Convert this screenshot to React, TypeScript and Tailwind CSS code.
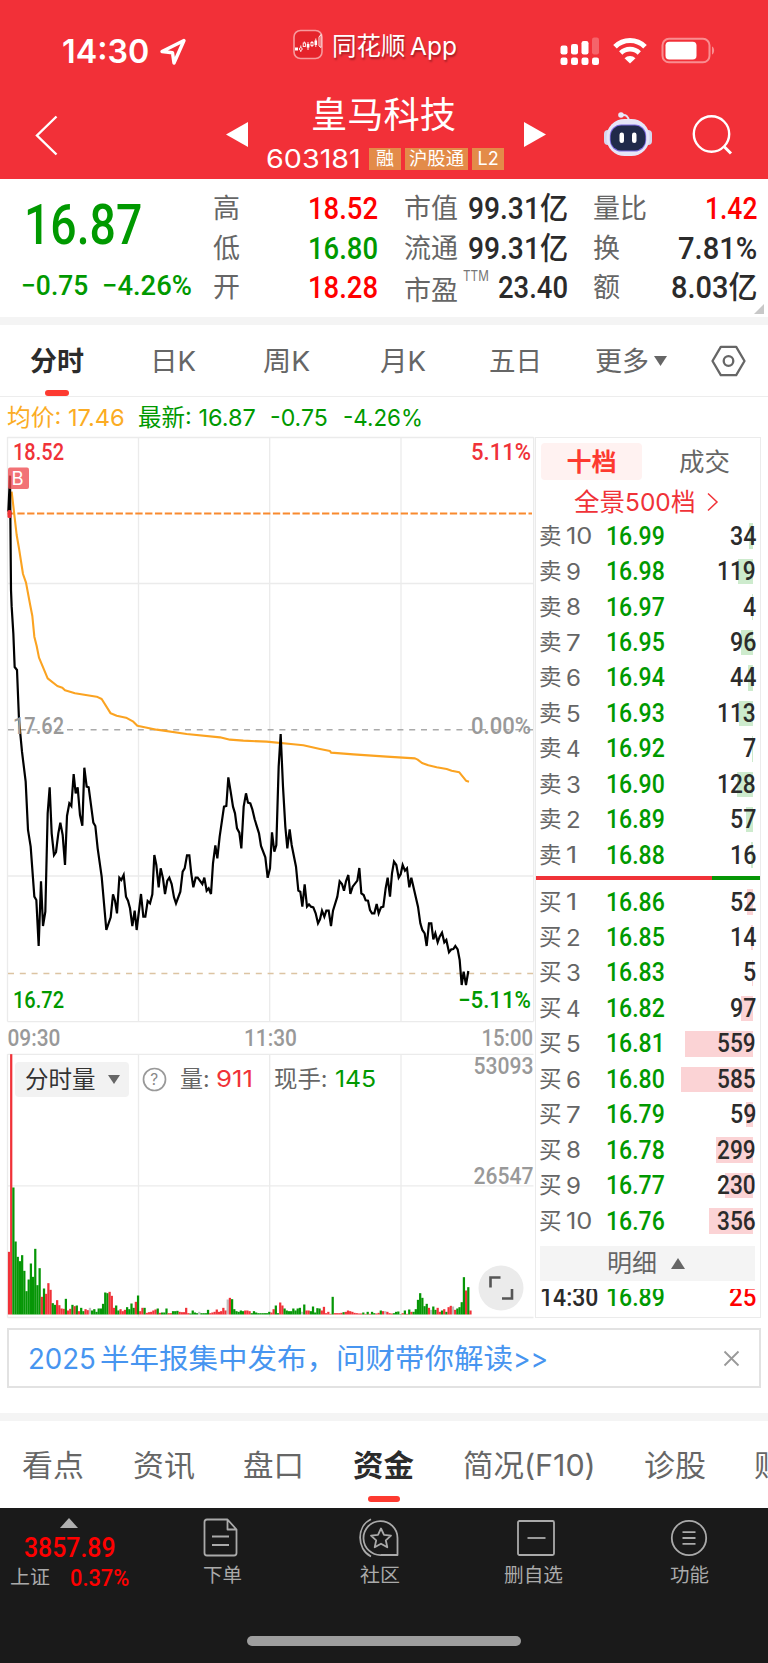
import { useLayoutEffect, useRef, useState } from "react";
import type { ReactNode } from "react";

const DIN = "font-['Roboto','Noto_Sans_CJK_SC',sans-serif]";
const SANS = "font-['Inter','Noto_Sans_CJK_SC',sans-serif]";

/** A single line of text condensed or stretched horizontally to a given width. */
function Fit({ w, className = "", children }: { w: number; className?: string; children: ReactNode }) {
  const ref = useRef<HTMLSpanElement>(null);
  const [k, setK] = useState(1);
  useLayoutEffect(() => {
    const n = ref.current?.offsetWidth ?? 0;
    if (n > 0) setK(w / n);
  }, [w, children]);
  return (
    <span className={`block shrink-0 leading-none ${className}`} style={{ width: w }}>
      <span
        ref={ref}
        className="block w-max origin-left whitespace-nowrap"
        style={{ transform: `scaleX(${k})` }}
      >
        {children}
      </span>
    </span>
  );
}

function StatusBar() {
  return (
    <div className="flex h-[90px] items-start pl-[62px]">
      <Fit w={87} className="mt-[35px] text-[33px] font-semibold">14:30</Fit>
      <svg className="mt-[37px] ml-[10px]" width="28" height="29" viewBox="0 0 28 29" fill="none" stroke="#fff" strokeWidth="3.4" strokeLinejoin="round">
        <path d="M25 3.5 3 14.5l10.5 1.2L15 26z" />
      </svg>
      <svg className="mt-[29px] ml-[106px]" width="30" height="31" viewBox="0 0 30 31" fill="none">
        <rect x="1" y="1.5" width="28" height="28" rx="6.5" fill="#e5232b" stroke="#f79a9d" strokeWidth="1.6" />
        <g fill="#fff">
          <rect x="2" y="18.500" width="3" height="3" />
          <rect x="13.800" y="15" width="2.600" height="3.500" />
          <rect x="21.500" y="11.500" width="2.600" height="4.500" />
        </g>
        <g stroke="#fff" strokeWidth="0.9">
          <circle cx="7.800" cy="20" r="1.400" />
          <path d="M7.800 16.500v2M7.800 21.500v1.500M11.300 12.500v1.500M15 13v8M22.800 9.500v8.500M19 12v1.500M19 16.500v1.500" />
          <rect x="10.200" y="14" width="2.200" height="3.500" />
          <rect x="18" y="13.500" width="2" height="3" />
          <path d="M26 17V8l2-2.500v13z" />
        </g>
      </svg>
      <Fit w={74} className="mt-[34px] ml-[9px] text-[24.500px] [text-shadow:1px_2px_2px_rgba(0,0,0,0.35)]">同花顺</Fit>
      <Fit w={47} className="mt-[34px] ml-[4px] text-[24.500px] [text-shadow:1px_2px_2px_rgba(0,0,0,0.35)]">App</Fit>
      <svg className="mt-[36px] ml-[103px]" width="40" height="30" viewBox="0 0 40 30" fill="#fff">
        <rect x="0.500" y="9.500" width="7" height="9" rx="2.200" />
        <rect x="11" y="8" width="7" height="10.500" rx="2.200" />
        <rect x="21.500" y="5" width="7" height="13.500" rx="2.200" />
        <rect x="32" y="1.500" width="7" height="17" rx="2.200" opacity="0.25" />
        <rect x="0.500" y="21.500" width="7" height="7.500" rx="2.200" />
        <rect x="11" y="21.500" width="7" height="7.500" rx="2.200" />
        <rect x="21.500" y="21.500" width="7" height="7.500" rx="2.200" />
        <rect x="32" y="21.500" width="7" height="7.500" rx="2.200" />
      </svg>
      <svg className="mt-[37px] ml-[12px]" width="36" height="28" viewBox="0 0 36 28" fill="none" stroke="#fff">
        <path d="M3 9.800a21 21 0 0 1 30 0" strokeWidth="5" />
        <path d="M8.700 16a13.200 13.200 0 0 1 18.600 0" strokeWidth="4.600" />
        <path d="M12.500 21.300a7.700 7.700 0 0 1 11 0L18 26.500z" fill="#fff" stroke="none" />
      </svg>
      <svg className="mt-[37px] ml-[13px]" width="55" height="28" viewBox="0 0 55 28" fill="none">
        <rect x="1.500" y="1.800" width="47" height="23.500" rx="6.500" stroke="#f98d90" strokeWidth="2" />
        <rect x="4.500" y="4.800" width="31" height="17.700" rx="3.800" fill="#fff" />
        <path d="M51 9.500c2.800 1 2.800 7 0 8z" fill="#f98d90" />
      </svg>
    </div>
  );
}

function Robot() {
  return (
    <svg width="50" height="46" viewBox="0 0 50 46" fill="none">
      <path d="M18 4.500c5-1.500 7.500 1 8 6" stroke="#e3e3f6" strokeWidth="2" />
      <circle cx="18" cy="4" r="2.800" fill="#e9e9fa" />
      <rect x="1" y="19" width="8" height="15" rx="4" fill="#d5d7ee" />
      <rect x="41" y="19" width="8" height="15" rx="4" fill="#d5d7ee" />
      <rect x="3.500" y="8" width="43" height="37" rx="18" fill="#e6e6f8" />
      <rect x="6.800" y="13.500" width="36.400" height="27" rx="11.500" fill="#7c6ae0" />
      <rect x="7.600" y="14.600" width="34.800" height="24.800" rx="10.500" fill="#202a4a" />
      <rect x="16.500" y="21.500" width="4.500" height="10.500" rx="2.200" fill="#fff" />
      <rect x="29" y="21.500" width="4.500" height="10.500" rx="2.200" fill="#fff" />
    </svg>
  );
}

function TitleBar() {
  return (
    <div className="flex h-[89px] items-start">
      <svg className="mt-[25px] ml-[35px]" width="23" height="41" viewBox="0 0 23 41" fill="none" stroke="#fff" strokeWidth="2.400">
        <path d="M21.500 1.500 2 20.500l19.500 19" />
      </svg>
      <svg className="mt-[32px] ml-[168px]" width="22" height="25" viewBox="0 0 22 25" fill="#fff"><path d="M0 12.500 22 0v25z" /></svg>
      <div className="ml-[18px] flex w-[240px] flex-col">
        <Fit w={145} className="mt-[7px] ml-[45px] text-[36px]">皇马科技</Fit>
        <div className="mt-[12px] flex h-[28px] items-center">
          <Fit w={95} className="text-[26px]">603181</Fit>
          <span className="ml-[8px] flex h-[22px] w-[32px] items-center justify-center bg-[#e38b49]"><Fit w={18} className="text-[18px]">融</Fit></span>
          <span className="ml-[4px] flex h-[22px] w-[63px] items-center justify-center bg-[#e38b49]"><Fit w={55} className="text-[18px]">沪股通</Fit></span>
          <span className="ml-[4px] flex h-[22px] w-[32px] items-center justify-center bg-[#e38b49]"><Fit w={21} className="text-[18px]">L2</Fit></span>
        </div>
      </div>
      <svg className="mt-[32px] ml-[18px]" width="22" height="25" viewBox="0 0 22 25" fill="#fff"><path d="M22 12.500 0 0v25z" /></svg>
      <div className="mt-[21px] ml-[57px]"><Robot /></div>
      <svg className="mt-[24px] ml-[38px]" width="42" height="42" viewBox="0 0 42 42" fill="none" stroke="#fff" strokeWidth="2.400">
        <circle cx="20.500" cy="20" r="17.700" />
        <path d="m32.500 32 7.500 7.500" strokeWidth="3" />
      </svg>
    </div>
  );
}

const LABEL = "text-[27px] text-[#666]";
const VAL = `${DIN} text-[31px] font-medium`;
const quote = [
  { a: ["高", "18.52"], up: true, b: ["市值", "99.31亿"], c: ["量比", "1.42"], cw: [54, 52] },
  { a: ["低", "16.80"], up: false, b: ["流通", "99.31亿"], c: ["换", "7.81%"], cw: [27, 79] },
  { a: ["开", "18.28"], up: true, b: ["市盈", "23.40"], c: ["额", "8.03亿"], cw: [27, 86] },
];

function Quote() {
  return (
    <div className="flex h-[138px] bg-white">
      <div className={`${DIN} w-[213px] pl-[21px] font-medium text-[#090]`}>
        <Fit w={118} className="mt-[19px] ml-[3px] text-[55px]">16.87</Fit>
        <div className="mt-[19px] flex">
          <Fit w={67} className="text-[28px]">−0.75</Fit>
          <Fit w={90} className="ml-[14px] text-[28px]">−4.26%</Fit>
        </div>
      </div>
      <div className="flex flex-col pt-[10px]">
        {quote.map((r, i) => (
          <div key={r.a[0]} className="flex h-[39.500px] items-center">
            <Fit w={27} className={LABEL}>{r.a[0]}</Fit>
            <Fit w={70} className={`ml-[68px] ${VAL} ${r.up ? "text-[#f00]" : "text-[#090]"}`}>{r.a[1]}</Fit>
            <Fit w={54} className={`ml-[26px] ${LABEL} ${i === 2 ? "pt-[6px]" : ""}`}>{r.b[0]}</Fit>
            {i === 2 && <Fit w={26} className="ml-[5px] pb-[23px] text-[14px] text-[#777]">TTM</Fit>}
            <Fit w={i === 2 ? 70 : 100} className={`${i === 2 ? "ml-[9px]" : "ml-[10px]"} text-[#2b2b2b] ${VAL}`}>{r.b[1]}</Fit>
            <Fit w={r.cw[0]} className={`ml-[25px] ${LABEL}`}>{r.c[0]}</Fit>
            <div className={`flex justify-end ${r.cw[0] === 54 ? "w-[110px]" : "w-[137px]"}`}>
              <Fit w={r.cw[1]} className={`${VAL} ${i === 0 ? "text-[#f00]" : "text-[#2b2b2b]"}`}>{r.c[1]}</Fit>
            </div>
          </div>
        ))}
      </div>
      <svg className="mb-[3px] -ml-[3px] self-end" width="10" height="10" viewBox="0 0 10 10" fill="#c8c8c8"><path d="M10 0v10H0z" /></svg>
    </div>
  );
}

function PeriodTabs() {
  const t = "mt-[2px] text-[27px] text-[#666]";
  return (
    <div className="flex h-[72px] items-center border-b border-[#ededed] pl-[30px]">
      <div className="flex h-full flex-col items-center">
        <Fit w={54} className="mt-[23px] text-[27px] font-bold text-[#2b2b2b]">分时</Fit>
        <span className="mt-[15px] h-[6px] w-[24px] rounded-[3px] bg-[#fd3a30]" />
      </div>
      <Fit w={46} className={`ml-[66px] ${t}`}>日K</Fit>
      <Fit w={47} className={`ml-[67px] ${t}`}>周K</Fit>
      <Fit w={46} className={`ml-[70px] ${t}`}>月K</Fit>
      <Fit w={53} className={`ml-[63px] ${t}`}>五日</Fit>
      <Fit w={54} className={`ml-[53px] ${t}`}>更多</Fit>
      <svg className="ml-[5px]" width="13" height="10" viewBox="0 0 13 10" fill="#666"><path d="M0 0h13L6.500 10z" /></svg>
      <svg className="ml-[44px]" width="35" height="32" viewBox="0 0 35 32" fill="none" stroke="#666" strokeWidth="2.300">
        <path d="M9.800 1.800h15.400L33.500 16l-8.300 14.200H9.800L1.500 16z" strokeLinejoin="round" />
        <circle cx="17.500" cy="16" r="4.800" />
      </svg>
    </div>
  );
}

// Traces are in thirds of a pixel; volume is [height, colour] per minute.
const avgTop = "35,185 50,315 57,355 69,432 78,458 90,522 97,558 103,620 110,648 117,683 143,745 172,768 187,773 195,781 225,790 290,800 305,807 332,850 350,857 378,863 400,875 412,887 470,899 560,912 660,922 690,929 730,932 800,935 880,943 910,946 960,957 990,963 993,968 1060,973 1160,980 1245,985 1253,989 1266,999 1285,1006 1310,1012 1340,1017 1355,1022 1378,1027 1398,1052 1407,1055";
const price1 = "25,245 30,137 33,480 35,530 40,610 44,711 51,720 57,870 66,965 77,1055 84,1200 92,1250 103,1400 109,1410 116,1548 123,1354 129,1488 136,1445 143,1150 149,1072 155,1210 162,1275 168,1266 175,1210 181,1178 188,1215 195,1305 201,1158 208,1120 214,1128 221,1032 227,1090 233,1072 240,1155 247,1187 253,1013 260,1070 266,1072 280,1178 286,1188 293,1255 305,1340 319,1500 332,1462 339,1393 345,1412 351,1450 358,1343 364,1350 371,1335 378,1400 384,1412 390,1435 397,1488 404,1442 410,1500 423,1392 430,1460 436,1460 443,1413 450,1420 457,1393 463,1275 469,1305 476,1372 482,1315 489,1345 495,1392 502,1352 508,1343 515,1362 522,1402 528,1420 541,1385 548,1325 554,1315 561,1276 568,1276 574,1332 580,1372 587,1343 593,1343 607,1362 613,1343 620,1382 626,1375 633,1392 639,1300 646,1246 652,1285 659,1220 672,1130 679,1128 685,1042 692,1085 699,1130 705,1150 711,1195 718,1208 724,1255 731,1130 738,1090 744,1118 751,1120 757,1138 764,1168 777,1210 783,1248 796,1282 803,1343";
const price2 = "803,1343 810,1315 816,1207 823,1265 829,1245 836,1010 842,912 849,1070 856,1190 862,1255 869,1198 875,1245 888,1310 895,1382 901,1385 907,1430 914,1363 921,1430 927,1423 933,1430 940,1432 947,1450 954,1480 960,1468 966,1442 973,1460 979,1442 986,1442 993,1488 999,1442 1012,1400 1019,1354 1026,1362 1032,1382 1038,1354 1045,1335 1051,1392 1058,1370 1072,1352 1078,1314 1084,1390 1091,1395 1097,1411 1104,1412 1110,1440 1116,1450 1123,1450 1130,1422 1136,1450 1143,1432 1150,1430 1157,1375 1163,1343 1170,1400 1176,1330 1182,1295 1189,1305 1196,1343 1202,1333 1208,1305 1215,1322 1221,1315 1228,1372 1234,1343 1254,1430 1261,1480 1267,1500 1274,1510 1280,1548 1287,1480 1294,1480 1300,1528 1306,1510 1313,1537 1319,1520 1326,1508 1333,1537 1339,1530 1347,1567 1354,1558 1360,1557 1366,1548 1373,1558 1379,1590 1385,1665 1391,1625 1398,1665 1405,1623";
const volume =
  "188r 781r 381g 219g 173g 160g 178g 131g 70g 105g 153g 113g 197g 88g 139g 53r 78g 62r 94r 74r 34g 29g 43r 28r 18r 17r 47g 12r 17r 29g 25r 27g 10r 20g 10g 16r 13r 20y 12g 16g 8g 18g 18g 32g 66g 64g 68r 56r 20r 27g 12g 16r 10r 14r 22g 16g 33g 20g 38r 57g 10r 20r 20g 5r 7r 8r 12r 15r 18g 5r 6g 6g 18g 4r 4r 10g 10g 11g 8r 7r 7r 20r 4r 3g 12g 6g 4g 8y 4g 4g 4g 14g 4r 6r 8r 15r 8r 10r 20r 12r 45y 50r 46g 16g 10g 8g 12g 10g 12r 12r 10r 4g 10g 6g 4g 4g 4g 4g 4g 8g 6r 16r 27g 4g 36r 27r 18g 12g 10g 10g 18g 12g 18g 20g 8y 30g 12r 12r 10g 24g 6g 19g 18g 12r 23r 4r 8r 2r 53g 4r 4r 4r 5r 7g 8r 12r 10r 8r 5r 4r 3r 3r 6g 2r 8g 2r 8g 4g 3r 5r 12g 10r 10y 8r 4r 3r 4g 8g 9g 1g 4r 12g 2r 15g 8r 8g 16g 44g 64g 50g 25g 32g 20r 14y 24g 14g 20r 8r 12g 16r 8g 22r 26r 24y 14r 18g 22g 37g 112g 72r 82g 12r"
    .split(" ")
    .map((s) => ({ h: parseInt(s, 10), c: s.slice(-1) }));
const volColor: Record<string, string> = { r: "#f03238", g: "#069606", y: "#bdbdbd" };

function ChartText({ x, y, w, fill, children }: { x: number; y: number; w: number; fill: string; children: string }) {
  return (
    <text x={x} y={y} textLength={w} lengthAdjust="spacingAndGlyphs" fill={fill} fontSize="23" className={`${DIN} font-medium`}>
      {children}
    </text>
  );
}

function Chart() {
  return (
    <div className="relative h-[883px] w-[535px] shrink-0">
      <svg className="overflow-visible" width="535" height="883" viewBox="0 437 535 883" fill="none">
        <g stroke="#ebebeb" strokeWidth="1.300">
          <path d="M7.500 437.500h526M7.500 583.500h526M7.500 876h526M7.500 1021.700h526M7.500 1054.300h526M7.500 1185.800h526M7.500 1317.500h526" />
          <path d="M7.500 437v584.500M138.500 437v584.500M269.700 437v584.500M401 437v584.500M533.700 437v584.500M7.500 1054v263.500M138.500 1054v263.500M269.700 1054v263.500M401 1054v263.500" />
        </g>
        <path d="M7.500 513.500H532" stroke="#f98a2e" strokeWidth="2.200" strokeDasharray="7.300 2.530" />
        <path d="M8 729.700H533" stroke="#aaa" strokeWidth="1.600" strokeDasharray="6 5.800" />
        <path d="M8 973.500H533" stroke="#dcc4a2" strokeWidth="1.400" strokeDasharray="6 5.800" />
        <g transform="translate(0 430) scale(0.33333)" strokeLinejoin="round">
          <polyline points={avgTop} stroke="#fba321" strokeWidth="6.300" />
          <polyline points={price1} stroke="#000" strokeWidth="6.600" strokeLinejoin="miter" />
          <polyline points={price2} stroke="#000" strokeWidth="6.600" strokeLinejoin="miter" />
        </g>
        <ChartText x={13} y={459.500} w={51} fill="#f03238">18.52</ChartText>
        <ChartText x={471} y={459.500} w={60} fill="#f03238">5.11%</ChartText>
        <ChartText x={13} y={734} w={51} fill="#999">17.62</ChartText>
        <ChartText x={471} y={734} w={60} fill="#999">0.00%</ChartText>
        <ChartText x={13} y={1008} w={51} fill="#090">16.72</ChartText>
        <ChartText x={458} y={1008} w={73} fill="#090">−5.11%</ChartText>
        <ChartText x={7.500} y={1045.500} w={53} fill="#999">09:30</ChartText>
        <ChartText x={244} y={1045.500} w={53} fill="#999">11:30</ChartText>
        <ChartText x={481.500} y={1045.500} w={51.500} fill="#999">15:00</ChartText>
        <ChartText x={473.500} y={1074} w={60} fill="#999">53093</ChartText>
        <ChartText x={473.500} y={1184} w={60} fill="#999">26547</ChartText>
        <rect x="7.500" y="510" width="4" height="8" rx="1.500" fill="#f03238" />
        <rect x="8" y="467.500" width="21" height="21.500" rx="2" fill="#ee4a4f" fillOpacity="0.78" />
        <text x="11.500" y="485" fontSize="18.500" fill="#fff" className={SANS}>B</text>
        <g>
          {volume.map((v, i) => (
            <rect key={i} x={7.900 + i * 2.187} y={1314.500 - v.h / 3} width={2.250} height={v.h / 3} fill={volColor[v.c]} />
          ))}
        </g>
        <circle cx="501" cy="1288" r="22.500" fill="#ebebeb" />
        <path d="M490.500 1287.500v-10h10M512 1289v9.500h-10" stroke="#555" strokeWidth="2.600" />
      </svg>
      <div className="absolute top-[625px] left-[15px] flex h-[35px] items-center text-[23px]">
        <div className="flex h-[35px] w-[114px] items-center rounded-[4px] bg-[#f2f2f2] pl-[10px]">
          <Fit w={71} className="text-[23.500px] text-[#333]">分时量</Fit>
          <svg className="ml-[12px]" width="12" height="9" viewBox="0 0 12 9" fill="#666"><path d="M0 0h12L6 9z" /></svg>
        </div>
        <svg className="ml-[13px]" width="25" height="25" viewBox="0 0 25 25" fill="none" stroke="#999" strokeWidth="1.700">
          <circle cx="12.500" cy="12.500" r="11" />
          <text x="8.300" y="18.300" fontSize="15.500" fill="#888" stroke="none" className={SANS}>?</text>
        </svg>
        <Fit w={30} className="ml-[13px] text-[#666]">量:</Fit>
        <Fit w={37} className="ml-[6px] text-[#f03238]">911</Fit>
        <Fit w={54} className="ml-[21px] text-[#666]">现手:</Fit>
        <Fit w={41} className="ml-[7px] text-[#090]">145</Fit>
      </div>
    </div>
  );
}

const asks: [number, string, number][] = [
  [10, "16.99", 34], [9, "16.98", 119], [8, "16.97", 4], [7, "16.95", 96], [6, "16.94", 44],
  [5, "16.93", 113], [4, "16.92", 7], [3, "16.90", 128], [2, "16.89", 57], [1, "16.88", 16],
];
const bids: [number, string, number][] = [
  [1, "16.86", 52], [2, "16.85", 14], [3, "16.83", 5], [4, "16.82", 97], [5, "16.81", 559],
  [6, "16.80", 585], [7, "16.79", 59], [8, "16.78", 299], [9, "16.77", 230], [10, "16.76", 356],
];

function Level({ side, row }: { side: "卖" | "买"; row: [number, string, number] }) {
  const [n, p, q] = row;
  return (
    <div className="flex h-[35.450px] items-center pl-[3px]">
      <Fit w={22.5} className="text-[23px] text-[#666]">{side}</Fit>
      <Fit w={n === 10 ? 26 : n === 1 ? 11 : 15} className="ml-[4.500px] pt-[1px] text-[22.500px] text-[#666]">{n}</Fit>
      <div className={`${n === 10 ? "ml-[14px]" : n === 1 ? "ml-[29px]" : "ml-[25px]"}`}>
        <Fit w={59} className={`${DIN} text-[25px] font-medium text-[#090]`}>{p}</Fit>
      </div>
      <div className="relative flex h-[25.500px] w-[91px] items-center justify-end">
        <div
          className={`absolute top-0 right-[3px] h-full ${side === "卖" ? "bg-[#cdebcd]" : "bg-[#fbd3d5]"}`}
          style={{ width: Math.max(0.7, q * 0.1225) }}
        />
        <Fit w={String(q).length * 13} className={`relative ${DIN} text-[25px] font-medium text-[#2b2b2b]`}>{q}</Fit>
      </div>
    </div>
  );
}

function OrderBook() {
  return (
    <div className="flex h-[881px] w-[226px] flex-col border border-[#ebebeb]">
      <div className="flex pt-[5px] pl-[5px]">
        <div className="flex h-[37px] w-[101px] items-center justify-center rounded-[4px] bg-[#fff2f1] pt-[1px]">
          <Fit w={50} className="text-[25px] font-bold text-[#fd3a30]">十档</Fit>
        </div>
        <div className="flex h-[37px] items-center pt-[1px] pl-[37px]"><Fit w={51} className="text-[25px] text-[#666]">成交</Fit></div>
      </div>
      <div className="flex h-[37px] items-center pt-[7px] pl-[38px] text-[#f03238]">
        <Fit w={51} className="text-[24.500px]">全景</Fit>
        <Fit w={46} className="text-[24.500px]">500</Fit>
        <Fit w={25} className="text-[24.500px]">档</Fit>
        <svg className="ml-[11px]" width="12" height="20" viewBox="0 0 12 20" fill="none" stroke="#f03238" strokeWidth="1.500"><path d="m1 1.500 9 8.500-9 8.500" /></svg>
      </div>
      <div className="pt-[1.500px]">{asks.map((r) => <Level key={r[0]} side="卖" row={r} />)}</div>
      <div className="mt-[3.500px] flex h-[4px] shrink-0">
        <span className="w-[176px] bg-[#f03238]" />
        <span className="flex-1 bg-[#069606]" />
      </div>
      <div className="pt-[4px]">{bids.map((r) => <Level key={r[0]} side="买" row={r} />)}</div>
      <div className="mt-[7px] ml-[4px] flex h-[35px] w-[215px] shrink-0 items-center bg-[#f4f4f4] pl-[67px]">
        <Fit w={50} className="text-[25px] text-[#666]">明细</Fit>
        <svg className="ml-[14px]" width="14" height="11" viewBox="0 0 14 11" fill="#666"><path d="M0 11h14L7 0z" /></svg>
      </div>
      <div className={`mt-[8px] flex h-[22px] shrink-0 items-start overflow-hidden pl-[4px] ${DIN} font-medium`}>
        <Fit w={58} className="-mt-[4px] text-[25px] text-[#2b2b2b]">14:30</Fit>
        <Fit w={59} className="-mt-[4px] ml-[8px] text-[25px] text-[#090]">16.89</Fit>
        <Fit w={27} className="-mt-[4px] ml-[64px] text-[25px] text-[#f00]">25</Fit>
      </div>
    </div>
  );
}

function InfoTabs() {
  const t = "text-[30px] text-[#666]";
  return (
    <div className="flex h-[87px] overflow-hidden pt-[29px] pl-[22px]">
      <Fit w={62} className={t}>看点</Fit>
      <Fit w={62} className={`ml-[49px] ${t}`}>资讯</Fit>
      <Fit w={61} className={`ml-[48px] ${t}`}>盘口</Fit>
      <div className="ml-[49px] flex flex-col items-center">
        <Fit w={61} className="text-[30px] font-bold text-[#2b2b2b]">资金</Fit>
        <span className="mt-[16px] h-[6px] w-[32px] rounded-[3px] bg-[#fd3a30]" />
      </div>
      <Fit w={133} className={`ml-[49px] ${t}`}>简况(F10)</Fit>
      <Fit w={62} className={`ml-[48px] ${t}`}>诊股</Fit>
      <Fit w={31} className={`ml-[48px] ${t}`}>财</Fit>
    </div>
  );
}

function NavItem({ label, w, className, children }: { label: string; w: number; className: string; children: ReactNode }) {
  return (
    <div className={`flex flex-col items-center pt-[10px] ${className}`}>
      <svg width="42" height="40" viewBox="0 0 42 40" fill="none" stroke="#aaa" strokeWidth="1.800" strokeLinejoin="round">{children}</svg>
      <Fit w={w} className="mt-[8px] text-[19px] text-[#aaa]">{label}</Fit>
    </div>
  );
}

function BottomNav() {
  return (
    <div className="flex h-[155px] flex-col bg-[#1a1a1a]">
      <div className="flex h-[128px]">
        <div className="w-[140px] pt-[10px] pl-[10px]">
          <svg className="ml-[50px]" width="18" height="10" viewBox="0 0 18 10" fill="#b0b0b0"><path d="M0 10h18L9 0z" /></svg>
          <Fit w={92} className={`mt-[7px] ml-[14px] ${DIN} text-[27px] font-medium text-[#f00]`}>3857.89</Fit>
          <div className="mt-[4px] flex items-center">
            <Fit w={40} className="text-[19.500px] text-[#aaa]">上证</Fit>
            <Fit w={59} className={`ml-[20px] ${DIN} text-[24px] font-medium text-[#f00]`}>0.37%</Fit>
          </div>
        </div>
        <NavItem label="下单" w={39} className="ml-[61px]">
          <path d="M3.500 4q0-2.500 2.500-2.500h20.500l9 10V35q0 2.500-2.500 2.500H6Q3.500 37.500 3.500 35zM26.500 1.500v10h9M11 18.500h17M11 27h17" />
        </NavItem>
        <NavItem label="社区" w={40} className="ml-[116px]">
          <path d="M12 1.200C-2.500 8-2.500 31 12 38.500M38.500 37H22.500A17 17 0 1 1 38.500 20z" />
          <path d="m22 10.500 3 6.300 7 .8-5.200 4.700 1.500 7-6.300-3.600-6.300 3.600 1.500-7-5.200-4.700 7-.8z" />
        </NavItem>
        <NavItem label="删自选" w={59} className="ml-[103px]">
          <rect x="5" y="3" width="36" height="34" rx="1.500" />
          <path d="M14.500 20h18" />
        </NavItem>
        <NavItem label="功能" w={39} className="ml-[105px]">
          <circle cx="21" cy="20" r="17.200" />
          <path d="M14.500 14.200h13M14.500 20h13M14.500 25.800h13" />
        </NavItem>
      </div>
      <span className="mx-auto h-[10px] w-[274px] rounded-full bg-[#9e9e9e]" />
    </div>
  );
}

export default function App() {
  return (
    <div className={`h-[1663px] w-[768px] overflow-hidden bg-white text-white ${SANS}`}>
      <div className="bg-[#f23038]">
        <StatusBar />
        <TitleBar />
      </div>
      <Quote />
      <div className="h-[8px] bg-[#f4f4f4]" />
      <PeriodTabs />
      <div className="flex h-[40px] items-center pt-[2px] pl-[7px] text-[23.500px]">
        <Fit w={118} className="text-[#fbac24]">均价: 17.46</Fit>
        <Fit w={118} className="ml-[13px] text-[#090]">最新: 16.87</Fit>
        <Fit w={58} className="ml-[14px] text-[#090]">-0.75</Fit>
        <Fit w={80} className="ml-[15px] text-[#090]">-4.26%</Fit>
      </div>
      <div className="flex h-[891px]">
        <Chart />
        <OrderBook />
      </div>
      <div className="mx-[7px] flex h-[60px] items-center justify-between border-2 border-[#e2e2e2] pr-[19px] pl-[19px]">
        <div className="flex pt-[1px] text-[28px] text-[#4795f0]">
          <Fit w={68}>2025</Fit>
          <Fit w={413} className="ml-[4px]">半年报集中发布，问财带你解读</Fit>
          <Fit w={35}>&gt;&gt;</Fit>
        </div>
        <svg width="17" height="17" viewBox="0 0 17 17" fill="none" stroke="#999" strokeWidth="1.800"><path d="m1.500 1.500 14 14M15.500 1.500l-14 14" /></svg>
      </div>
      <div className="mt-[25px] h-[8px] bg-[#f4f4f4]" />
      <InfoTabs />
      <BottomNav />
    </div>
  );
}
